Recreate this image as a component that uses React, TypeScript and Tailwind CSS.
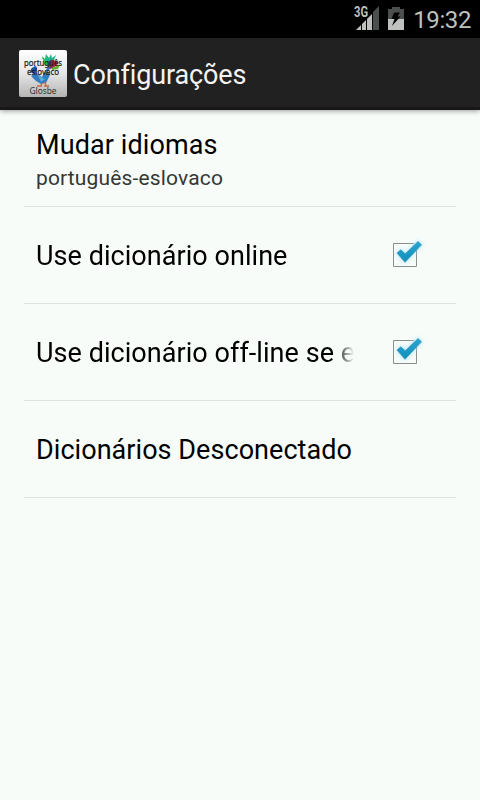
import type { ReactNode } from "react";

type Preference = {
  title: string;
  summary?: string;
  checked?: boolean;
};

const preferences: Preference[] = [
  { title: "Mudar idiomas", summary: "português-eslovaco" },
  { title: "Use dicionário online", checked: true },
  { title: "Use dicionário off-line se e", checked: true },
  { title: "Dicionários Desconectado" },
];

function SignalIcon() {
  return (
    <svg width="26" height="26" viewBox="0 0 26 26" className="block">
      <path d="M2 25L7 20V25Z" fill="#bec1be" />
      <path d="M8 25V19L12 15V25Z" fill="#bec1be" />
      <path d="M13 25V14L18 9V25Z" fill="#bec1be" />
      <path d="M19 25V7L25 1V25Z" fill="#4b504f" />
      <text
        x="0"
        y="12"
        fontSize="14.5"
        fontWeight="700"
        textLength="14"
        lengthAdjust="spacingAndGlyphs"
        fill="#bec1be"
        stroke="#000"
        strokeWidth="1"
        paintOrder="stroke"
      >
        3G
      </text>
    </svg>
  );
}

function BatteryIcon() {
  return (
    <svg width="16" height="23" viewBox="0 0 16 23" className="block">
      <path d="M4 0H12V2H16V12H0V2H4Z" fill="#4b504f" />
      <path d="M0 12H16V23H0Z" fill="#bec1be" />
      <path d="M6 5.5H12L9.5 9.5H12.5L4 19L6.5 12H3.5Z" fill="#000" />
    </svg>
  );
}

function LauncherIcon() {
  return (
    <div className="mt-px h-[47px] w-12 shrink-0 overflow-hidden rounded-[2px] bg-linear-to-b from-white via-[#e6e6e6] to-[#b4b4b4]">
      <svg width="48" height="48" viewBox="0 0 48 48">
        {/* tail feathers */}
        <path d="M26 15L23 6L26 9L27 4L30 8L32 4L33 8L37 5L35 10L33 16Z" fill="#20b58c" />
        <path d="M23 7L28 12L26 16Z" fill="#3fc43a" />
        <path d="M30 11Q34 8 36 11L34 18L28 20Z" fill="#78354e" />
        <path d="M34 12Q38 8 39 14L33 19Z" fill="#b22d55" />
        <path d="M33 18L41 14L39 19L33 20Z" fill="#65b329" />
        {/* bird */}
        <path d="M15 15L18 17L17 23L23 27L28 18L31 17L29 22L31 25L27 33L22 34L17 31L12 26L15 24Z" fill="#347cc0" />
        <path d="M12 19Q15 15 18 19L15 24Q11 23 12 19Z" fill="#1e4f9b" />
        <path d="M19 25L26 29L22 32Z" fill="#5fa5d8" />
        <path d="M23 33L22 36M26 32L27 36M18 36H23M25 36H30" stroke="#c66a3b" strokeWidth="1.4" fill="none" />
        <g fill="#16191c" textAnchor="middle" fontFamily="'Noto Sans', 'Open Sans', sans-serif">
          <text x="24" y="15.5" fontSize="9" textLength="38" lengthAdjust="spacingAndGlyphs" stroke="#16191c" strokeWidth="0.2">português</text>
          <text x="24" y="25" fontSize="9" textLength="32" lengthAdjust="spacingAndGlyphs" stroke="#16191c" strokeWidth="0.2">eslovaco</text>
          <text x="24" y="43.5" fontSize="9.5" textLength="27" lengthAdjust="spacingAndGlyphs" fill="#333">Glosbe</text>
        </g>
      </svg>
    </div>
  );
}

function CheckMark() {
  return (
    <svg width="48" height="48" viewBox="0 0 48 48" className="block shrink-0">
      <defs>
        <filter id="glow" x="-30%" y="-30%" width="160%" height="160%">
          <feGaussianBlur stdDeviation="2" />
        </filter>
        <linearGradient id="tick" x1="0" y1="0" x2="0" y2="1">
          <stop offset="0" stopColor="#27a5d2" />
          <stop offset="1" stopColor="#1290bd" />
        </linearGradient>
      </defs>
      <path d="M13.5 12.5H36.5V35.5H13.5Z" fill="none" stroke="#8c8e8d" />
      <path d="M34 11H39V19H34Z" fill="#f7fcf9" />
      <path d="M17 22L20.8 18.8L25.3 22.8L38 10.5L41.5 13.8L25 31.3Z" fill="#9be0fa" stroke="#9be0fa" strokeWidth="2" opacity="0.65" filter="url(#glow)" />
      <path d="M17 22L20.8 18.8L25.3 22.8L38 10.5L41.5 13.8L25 31.3Z" fill="url(#tick)" stroke="#3d91ad" strokeWidth="0.7" />
    </svg>
  );
}

function PreferenceRow({ item, widget }: { item: Preference; widget?: ReactNode }) {
  return (
    <li className="mx-6 flex h-[97px] items-center border-b border-[#dce1de] pl-3">
      <div className={`min-w-0 ${widget ? "w-[318px] mask-r-from-[94%]" : "flex-1"}`}>
        <div
          className={`text-[27px] leading-8 whitespace-nowrap text-black ${
            item.summary ? "pt-1 tracking-[0.1px]" : "pt-[2px] tracking-[0.05px]"
          }`}
        >
          {item.title}
        </div>
        {item.summary && (
          <div className="mt-1 text-[21px] leading-[26px] tracking-[0.15px] text-[#353736]">{item.summary}</div>
        )}
      </div>
      {widget && <div className="ml-[26px]">{widget}</div>}
    </li>
  );
}

export default function App() {
  return (
    <div className="flex h-[800px] w-[480px] flex-col overflow-hidden bg-[#f7fcf9] font-[Roboto,sans-serif]">
      {/* STATUS BAR */}
      <div className="flex h-[38px] shrink-0 justify-end bg-black pr-[9px] text-[#bec1be]">
        <div className="mt-[5px]">
          <SignalIcon />
        </div>
        <div className="mt-[7px] ml-2">
          <BatteryIcon />
        </div>
        <span className="ml-[9px] text-2xl leading-[41px] tracking-[-0.4px]">19:32</span>
      </div>

      {/* ACTION BAR */}
      <header className="flex h-[72px] shrink-0 items-center border-b-[3px] border-[#171717] bg-[#212121] pl-[19px] shadow-[0_1px_5px_rgba(0,0,0,0.4)]">
        <LauncherIcon />
        <h1 className="ml-[6px] pt-[5px] text-[27px] leading-8 tracking-[-0.13px] text-[#f3f3f3]">
          Configurações
        </h1>
      </header>

      <ul>
        {preferences.map((item) => (
          <PreferenceRow
            key={item.title}
            item={item}
            widget={item.checked ? <CheckMark /> : undefined}
          />
        ))}
      </ul>
    </div>
  );
}
